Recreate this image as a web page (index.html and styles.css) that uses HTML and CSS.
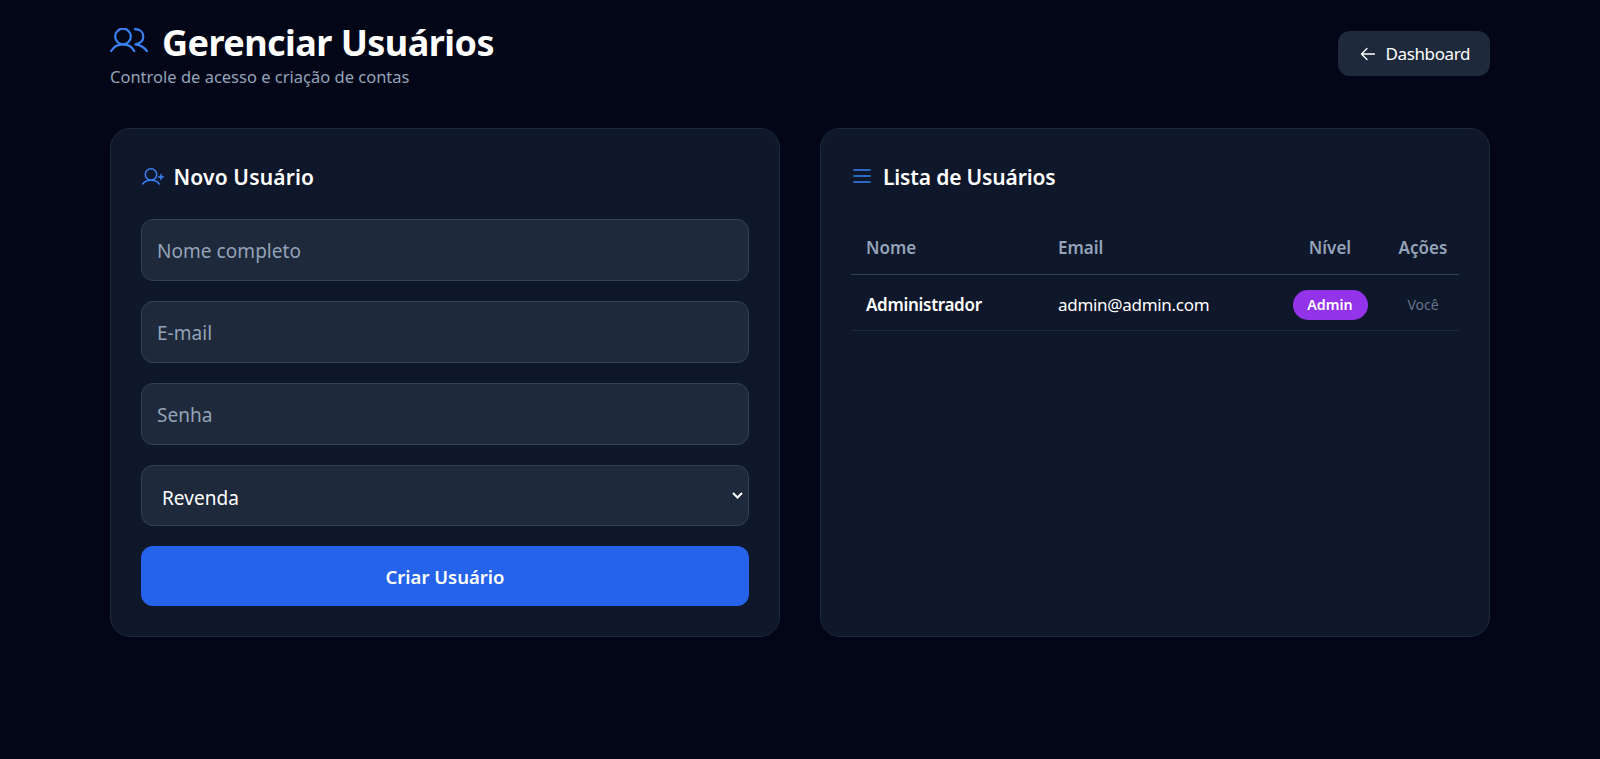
FILE: index.html
```html
<!DOCTYPE html>
<html lang="pt-BR">
<head>
<meta charset="utf-8">
<title>Gerenciar Usuários</title>
<link rel="stylesheet" href="styles.css">
</head>
<body>
<div class="container">
  <header class="page-header">
    <div class="titles">
      <h1 class="page-title">
        <svg class="icon-users" viewBox="0 0 38 24" fill="none" stroke="#3b82f6" stroke-width="2.200" stroke-linecap="round" stroke-linejoin="round"><circle cx="13" cy="8.500" r="7.800"/><path d="M1.200 23c2.500-4.500 6.500-6.700 11.800-6.700S22 18.500 24.300 23"/><path d="M25 1.200c5 0 8.300 3 8.300 7.300s-3 7-7.800 7.800c4.500.5 8.500 2.700 11.300 6.700"/></svg>
        <span>Gerenciar Usuários</span>
      </h1>
      <p class="subtitle">Controle de acesso e criação de contas</p>
    </div>
    <a class="back-btn" href="#">
      <svg class="icon-arrow" viewBox="0 0 16 14" fill="none" stroke="#fff" stroke-width="1.300" stroke-linecap="round" stroke-linejoin="round"><path d="M14.500 7H1.500M7 1.500 1.500 7 7 12.500"/></svg>
      <span>Dashboard</span>
    </a>
  </header>
  <main class="grid">
    <section class="card">
      <h2 class="card-title">
        <svg class="icon-add" viewBox="0 0 22 17" fill="none" stroke="#3b82f6" stroke-width="1.500" stroke-linecap="round" stroke-linejoin="round"><circle cx="9" cy="6.500" r="5.700"/><path d="M.8 16c1.700-2.800 4.700-3.800 8.200-3.800s6.500 1 8.200 3.800"/><path d="M19 6.500v5M16.500 9h5"/></svg>
        <span class="title-text title-wide">Novo Usuário</span>
      </h2>
      <form class="form">
        <input class="field" type="text" placeholder="Nome completo">
        <input class="field" type="email" placeholder="E-mail">
        <input class="field" type="password" placeholder="Senha">
        <select class="field select">
          <option>Revenda</option>
          <option>Admin</option>
        </select>
        <button class="submit" type="button">Criar Usuário</button>
      </form>
    </section>
    <section class="card">
      <h2 class="card-title">
        <svg class="icon-list" viewBox="0 0 18 14" fill="none" stroke="#3b82f6" stroke-width="1.500" stroke-linecap="round"><path d="M1 1h16M1 7h16M1 13h16"/></svg>
        <span class="title-text title-narrow">Lista de Usuários</span>
      </h2>
      <table class="table">
        <thead>
          <tr><th class="c-name">Nome</th><th class="c-email">Email</th><th class="c-level">Nível</th><th class="c-act">Ações</th></tr>
        </thead>
        <tbody>
          <tr>
            <td class="c-name strong">Administrador</td>
            <td class="c-email">admin@admin.com</td>
            <td class="c-level"><span class="badge">Admin</span></td>
            <td class="c-act you">Você</td>
          </tr>
        </tbody>
      </table>
    </section>
  </main>
</div>
</body>
</html>
```
FILE: styles.css
```css
* { box-sizing: border-box; }
html, body { margin: 0; height: 100%; }
body {
  background: #020617;
  color: #fff;
  font-family: "Noto Sans", "Open Sans", sans-serif;
  overflow: hidden;
}
.container { width: 1380px; margin: 0 auto; padding-top: 20px; }
.page-header { display: flex; justify-content: space-between; align-items: flex-start; height: 68px; margin-bottom: 40px; }
.page-title { display: flex; align-items: center; gap: 14px; margin: 1px 0 0; font-size: 36px; line-height: 44px; font-weight: 700; letter-spacing: -0.55px; }
.icon-users { width: 38px; height: 24px; margin-bottom: 6px; }
.subtitle { margin: 1px 0 0; font-size: 16.500px; line-height: 22px; color: #94a3b8; }
.back-btn { display: flex; align-items: center; gap: 10px; height: 45px; margin-top: 11px; padding: 0 20px 0 22px; background: #1e293b; border-radius: 12px; color: #fff; text-decoration: none; font-size: 17px; letter-spacing: -0.4px; }
.icon-arrow { width: 16px; height: 14px; }
.grid { display: grid; grid-template-columns: 670px 670px; gap: 40px; }
.card { height: 509px; padding: 30px; background: #0f172a; border: 1px solid #1e293b; border-radius: 20px; }
.card-title { display: flex; align-items: center; gap: 9px; height: 32px; margin: 1px 0 27px; font-size: 21px; line-height: 30px; font-weight: 600; }
.title-text { padding-top: 2px; }
.title-wide { letter-spacing: 0.15px; margin-left: 0.5px; }
.title-narrow { letter-spacing: -0.15px; margin-left: -1px; }
.icon-add { width: 22px; height: 17px; margin-left: 1px; }
.icon-list { width: 18px; height: 14px; margin: 0 4px 0 2px; }
.form { display: flex; flex-direction: column; gap: 20px; }
.field { display: block; flex: none; width: 100%; height: 62px; padding: 2px 15px 0; background: #1e293b; border: 1px solid #334155; border-radius: 12px; color: #fff; font-family: inherit; font-size: 19px; letter-spacing: 0.05px; outline: none; }
.field::placeholder { color: #94a3b8; opacity: 1; }
.select {
  height: 60.500px;
  padding: 5px 15px 0 20px;
  appearance: none;
  background-image: url("data:image/svg+xml;utf8,<svg xmlns='http://www.w3.org/2000/svg' width='11' height='7' viewBox='0 0 11 7'><path d='M1 1l4.500 4.500L10 1' fill='none' stroke='white' stroke-width='2'/></svg>");
  background-repeat: no-repeat;
  background-position: right 5px center;
}
.submit { height: 60px; flex: none; padding-top: 2px; background: #2563eb; border: 0; border-radius: 12px; color: #fff; font-family: inherit; font-size: 18.500px; font-weight: 600; }
.table { width: 100%; border-collapse: collapse; margin-top: 3px; table-layout: fixed; }
.table th { height: 55px; padding-top: 4px; font-size: 17px; font-weight: 600; color: #94a3b8; border-bottom: 1px solid #334155; }
.table td { height: 56px; padding-top: 6px; font-size: 17px; border-bottom: 1px solid #1e293b; letter-spacing: -0.3px; }
.c-name { width: 192px; padding-left: 15px; text-align: left; }
.c-email { width: 230px; padding-left: 15px; text-align: left; }
.c-level { width: 114px; text-align: center; }
.c-act { text-align: center; }
.strong { font-weight: 600; }
.badge { display: inline-block; width: 75px; height: 30px; line-height: 30px; border-radius: 15px; background: #9333ea; font-size: 14.300px; font-weight: 600; letter-spacing: 0; text-align: center; }
.table .you { font-size: 14px; letter-spacing: 0; color: #64748b; }
```
